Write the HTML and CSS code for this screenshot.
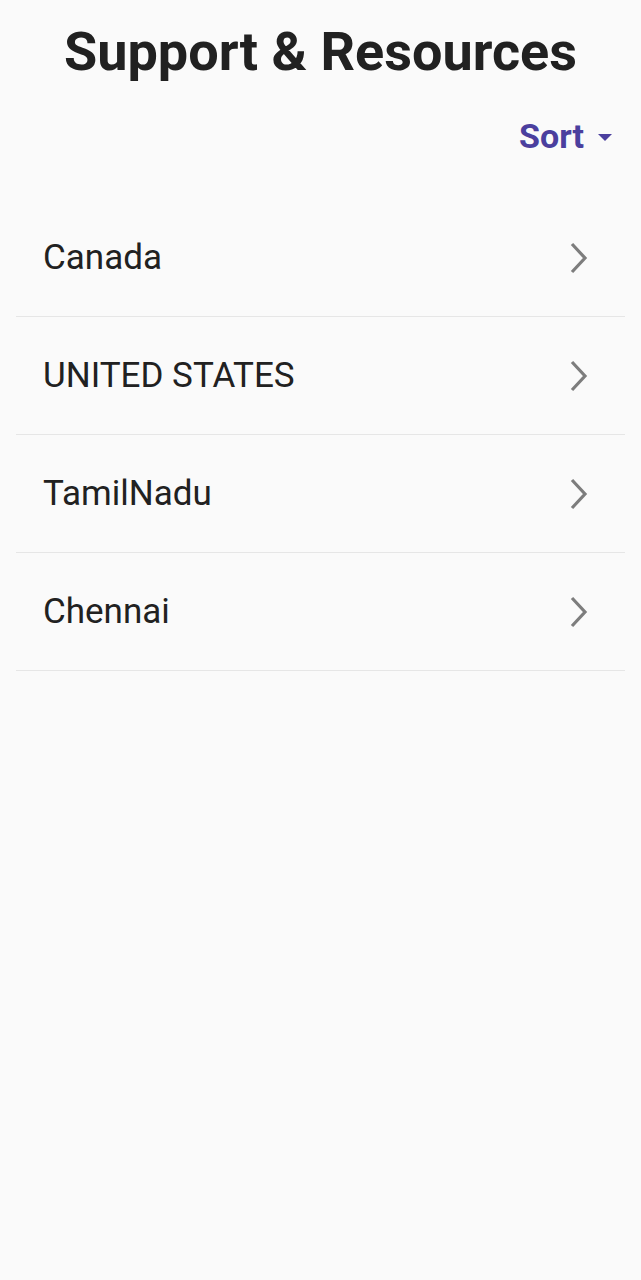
FILE: index.html
```html
<!DOCTYPE html>
<html>
<head>
<meta charset="utf-8">
<link rel="stylesheet" href="styles.css">
</head>
<body>
<div class="page">
  <h1 class="title">Support &amp; Resources</h1>
  <div class="sort-row">
    <button class="sort">Sort<svg class="caret" width="14" height="7" viewBox="0 0 14 7"><path d="M0 0H14L7 7Z" fill="#4b3f9e"/></svg></button>
  </div>
  <ul class="list">
    <li class="item"><span>Canada</span><svg class="chev" width="24" height="34" viewBox="0 0 24 34"><path d="M4 3L17 17L4 31" fill="none" stroke="#7d7d7d" stroke-width="3.2"/></svg></li>
    <li class="item"><span>UNITED STATES</span><svg class="chev" width="24" height="34" viewBox="0 0 24 34"><path d="M4 3L17 17L4 31" fill="none" stroke="#7d7d7d" stroke-width="3.2"/></svg></li>
    <li class="item"><span>TamilNadu</span><svg class="chev" width="24" height="34" viewBox="0 0 24 34"><path d="M4 3L17 17L4 31" fill="none" stroke="#7d7d7d" stroke-width="3.2"/></svg></li>
    <li class="item"><span>Chennai</span><svg class="chev" width="24" height="34" viewBox="0 0 24 34"><path d="M4 3L17 17L4 31" fill="none" stroke="#7d7d7d" stroke-width="3.2"/></svg></li>
  </ul>
</div>
</body>
</html>
```
FILE: styles.css
```css
html, body { margin: 0; padding: 0; background: #fafafa; }
body { font-family: Roboto, "Noto Sans", sans-serif; color: #212121; }
.page { width: 641px; min-height: 1280px; background: #fafafa; }
.title { margin: 0; padding-top: 22px; text-align: center; font-size: 54px; font-weight: 700; line-height: 60px; color: #212121; }
.sort-row { display: flex; justify-content: flex-end; padding: 34px 29px 0 0; }
.sort { display: flex; align-items: center; gap: 14px; background: none; border: 0; padding: 0; font-family: Roboto, sans-serif; font-size: 34px; font-weight: 700; line-height: 40px; color: #4b3f9e; }
.caret { margin-top: 2px; }
.list { list-style: none; margin: 43px 16px 0 16px; padding: 0; }
.item { display: flex; align-items: center; justify-content: space-between; height: 117px; border-bottom: 1px solid #e6e6e6; padding: 0 33px 0 27px; font-size: 35px; color: #212121; }
.chev { display: block; }
```
